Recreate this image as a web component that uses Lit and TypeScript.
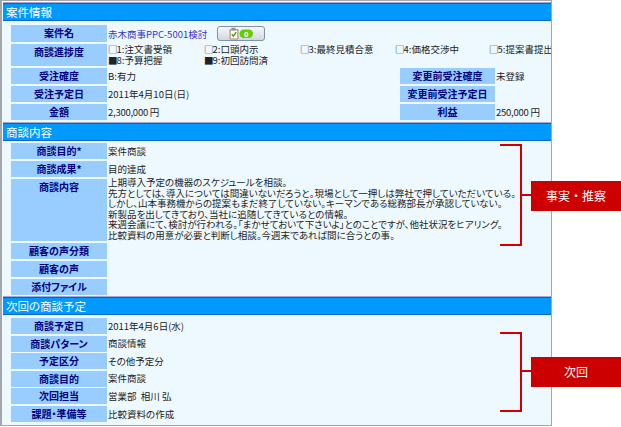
import { LitElement, html, css } from "lit";
import { customElement } from "lit/decorators.js";

@customElement("app-root")
export class AppRoot extends LitElement {
  static styles = css`
    :host {
      display: block;
      position: relative;
      width: 621px;
      height: 427px;
      overflow: hidden;
      background: #fff;
      font-family: "Noto Sans CJK JP", "Liberation Sans", sans-serif;
      font-feature-settings: "palt";
      font-size: 9.5px;
      line-height: 10.6px;
      color: #222;
    }
    .frame {
      box-sizing: border-box;
      width: 552px;
      height: 426px;
      border: 1px solid #a4a6ac;
      border-left-width: 2px;
      padding: 2px 0 0 1px;
      overflow: hidden;
      background: linear-gradient(#fff 0 3px, #eef9ff 3px);
    }
    .head {
      box-sizing: border-box;
      height: 18px;
      background: #0099ff;
      border-top: 1px solid #0066cc;
      border-bottom: 1px solid #0066cc;
      box-shadow: 0 -1px 0 #a6a8cc;
      color: #fff;
      font-size: 11.5px;
      line-height: 16px;
      padding-left: 3px;
      white-space: nowrap;
    }
    .grid {
      display: grid;
      grid-template-columns: 96px 291px 95px 56px;
      column-gap: 1px;
      padding-left: 8px;
      white-space: nowrap;
    }
    .s1 {
      grid-template-rows: 17px 22px 16px 16px 16px;
      row-gap: 2px;
      padding-top: 4px;
      height: 98px;
    }
    .s2 {
      grid-template-rows: 16px 16px 62px 16px 16px 16px;
      row-gap: 2px;
      padding-top: 2px;
      height: 154px;
    }
    .s3 {
      grid-template-rows: repeat(6, 16px);
      row-gap: 1.6px;
      padding-top: 3px;
    }
    .label {
      background: #99ccff;
      color: #000080;
      font-weight: 700;
      font-size: 10px;
      line-height: 16px;
      text-align: center;
      overflow: hidden;
    }
    .value {
      align-self: center;
    }
    .wide { grid-column: span 3; }
    .top { align-self: start; }
    .lines { margin-top: -2px; }
    .name {
      display: flex;
      align-items: center;
      gap: 10px;
    }
    .link {
      color: #3333cc;
      margin-top: 2px;
    }
    .btn {
      display: flex;
      align-items: center;
      justify-content: center;
      box-sizing: border-box;
      width: 48px;
      height: 15px;
      border: 1px solid #7b93ad;
      border-radius: 3px;
      background: linear-gradient(#f6f7f9, #e2e4ea 60%, #d4d7df);
    }
    .opts {
      display: grid;
      grid-template-columns: 96px 96px 95px 94px 100px;
    }
    .box {
      font-feature-settings: normal;
      margin-right: -1px;
    }
    .amount { letter-spacing: -0.25px; }
    .callout {
      position: absolute;
      left: 531px;
      width: 90px;
      height: 30px;
      background: #cc0000;
      color: #fff;
      font-size: 12px;
      font-feature-settings: normal;
      line-height: 30px;
      text-align: center;
    }
    .c1 { top: 181px; }
    .c2 { top: 357px; }
    .bracket {
      position: absolute;
      left: 500px;
      width: 20px;
      border: 2px solid #cc0000;
      border-left: 0;
    }
    .b1 { top: 144px; height: 98px; }
    .b2 { top: 332px; height: 76px; }
    .stub {
      position: absolute;
      left: 522px;
      width: 9px;
      height: 2px;
      background: #cc0000;
    }
    .t1 { top: 194px; }
    .t2 { top: 370px; }
  `;

  render() {
    return html`
      <div class="frame">
        <div class="head">案件情報</div>
        <div class="grid s1">
          <div class="label">案件名</div>
          <div class="value wide name">
            <span class="link">赤木商事PPC-5001検討</span>
            <span class="btn">
              <svg width="26" height="13" viewBox="0 0 26 13">
                <rect x="1.5" y="2" width="9" height="10.5" rx="0.8" fill="#c09a70" />
                <rect x="2.8" y="3.4" width="6.4" height="8" fill="#fdfdf6" />
                <rect x="3.5" y="0.8" width="4" height="2.6" fill="#8b8f96" />
                <path d="M3.8 7.2l1.6 2 2.8-4" fill="none" stroke="#3a9a20" stroke-width="1.3" />
                <rect x="11.5" y="2.5" width="13.5" height="8.5" rx="4.2" fill="#66cc00" />
                <text x="18.2" y="9.6" font-size="8" font-weight="700" fill="#fff" text-anchor="middle" font-family="Liberation Sans">0</text>
              </svg>
            </span>
          </div>
          <div class="label">商談進捗度</div>
          <div class="top wide">
            <div class="opts">
              <span><span class="box">□</span>1:注文書受領</span>
              <span><span class="box">□</span>2:口頭内示</span>
              <span><span class="box">□</span>3:最終見積合意</span>
              <span><span class="box">□</span>4:価格交渉中</span>
              <span><span class="box">□</span>5:提案書提出</span>
              <span><span class="box">■</span>8:予算把握</span>
              <span><span class="box">■</span>9:初回訪問済</span>
            </div>
          </div>
          <div class="label">受注確度</div>
          <div class="value">B:有力</div>
          <div class="label">変更前受注確度</div>
          <div class="value">未登録</div>
          <div class="label">受注予定日</div>
          <div class="value">2011年4月10日(日)</div>
          <div class="label">変更前受注予定日</div>
          <div class="value"></div>
          <div class="label">金額</div>
          <div class="value amount">2,300,000 円</div>
          <div class="label">利益</div>
          <div class="value amount">250,000 円</div>
        </div>
        <div class="head">商談内容</div>
        <div class="grid s2">
          <div class="label">商談目的*</div>
          <div class="value wide">案件商談</div>
          <div class="label">商談成果*</div>
          <div class="value wide">目的達成</div>
          <div class="label">商談内容</div>
          <div class="top wide lines">
            <div>上期導入予定の機器のスケジュールを相談。</div>
            <div>先方としては、導入については間違いないだろうと。現場として一押しは弊社で押していただいている。</div>
            <div>しかし、山本事務機からの提案もまだ終了していない。キーマンである総務部長が承認していない。</div>
            <div>新製品を出してきており、当社に追随してきているとの情報。</div>
            <div>来週会議にて、検討が行われる。「まかせておいて下さいよ」とのことですが、他社状況をヒアリング。</div>
            <div>比較資料の用意が必要と判断し相談。今週末であれば間に合うとの事。</div>
          </div>
          <div class="label">顧客の声分類</div>
          <div class="value wide"></div>
          <div class="label">顧客の声</div>
          <div class="value wide"></div>
          <div class="label">添付ファイル</div>
          <div class="value wide"></div>
        </div>
        <div class="head">次回の商談予定</div>
        <div class="grid s3">
          <div class="label">商談予定日</div>
          <div class="value wide">2011年4月6日(水)</div>
          <div class="label">商談パターン</div>
          <div class="value wide">商談情報</div>
          <div class="label">予定区分</div>
          <div class="value wide">その他予定分</div>
          <div class="label">商談目的</div>
          <div class="value wide">案件商談</div>
          <div class="label">次回担当</div>
          <div class="value wide">営業部&nbsp;&nbsp;相川 弘</div>
          <div class="label">課題・準備等</div>
          <div class="value wide">比較資料の作成</div>
        </div>
      </div>
      <div class="bracket b1"></div>
      <div class="stub t1"></div>
      <div class="callout c1">事実・推察</div>
      <div class="bracket b2"></div>
      <div class="stub t2"></div>
      <div class="callout c2">次回</div>
    `;
  }
}
